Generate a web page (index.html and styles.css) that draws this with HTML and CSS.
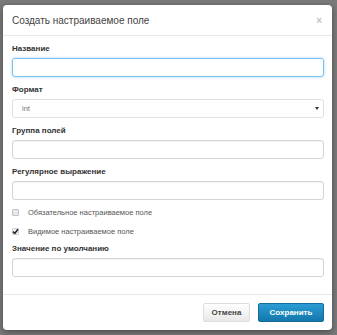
FILE: index.html
```html
<!DOCTYPE html>
<html>
<head>
<meta charset="utf-8">
<link rel="stylesheet" href="styles.css">
</head>
<body>
<div class="modal">
  <div class="modal-header">
    <h4 class="title">Создать настраиваемое поле</h4>
    <span class="close">×</span>
  </div>
  <div class="modal-body">
    <div class="group">
      <label class="lbl">Название</label>
      <div class="input focus"></div>
    </div>
    <div class="group">
      <label class="lbl">Формат</label>
      <div class="input select"><span class="val">int</span><span class="caret"></span></div>
    </div>
    <div class="group">
      <label class="lbl">Группа полей</label>
      <div class="input"></div>
    </div>
    <div class="group">
      <label class="lbl">Регулярное выражение</label>
      <div class="input"></div>
    </div>
    <div class="check first"><span class="box"></span>Обязательное настраиваемое поле</div>
    <div class="check"><span class="box checked"><svg width="7" height="7" viewBox="0 0 7 7"><path d="M1 3.6 L2.8 5.4 L6 1.2" fill="none" stroke="#222" stroke-width="1.6"/></svg></span>Видимое настраиваемое поле</div>
    <div class="group after-check">
      <label class="lbl">Значение по умолчанию</label>
      <div class="input"></div>
    </div>
  </div>
  <div class="modal-footer">
    <button class="btn btn-default">Отмена</button>
    <button class="btn btn-primary">Сохранить</button>
  </div>
</div>
</body>
</html>
```
FILE: styles.css
```css
html, body { margin: 0; padding: 0; }
body {
  width: 337px; height: 335px;
  background: #7a7a7a;
  font-family: "Liberation Sans", Arial, sans-serif;
  overflow: hidden;
  padding: 5px 5px 0 3px;
  box-sizing: border-box;
}
.modal {
  width: 329px;
  height: 325px;
  background: #fff;
  border-radius: 4px;
  box-shadow: 0 2px 6px rgba(0,0,0,0.4);
  box-sizing: border-box;
  display: flex;
  flex-direction: column;
}
.modal-header {
  height: 30px;
  flex: none;
  border-bottom: 1px solid #e8e8e8;
  display: flex;
  align-items: center;
  justify-content: space-between;
  padding: 0 10px 0 9px;
}
.title {
  margin: 0;
  font-weight: normal;
  font-size: 10px;
  color: #444;
  padding-top: 1px;
}
.close {
  color: #c4c4c4;
  font-size: 10px;
  font-weight: bold;
}
.modal-body {
  padding: 8px 8px 8px 9px;
  flex: 1;
  border-bottom: 1px solid #e8e8e8;
}
.group { margin-bottom: 8px; }
.lbl {
  display: block;
  font-size: 8px;
  font-weight: bold;
  color: #333;
  height: 10px;
  line-height: 10px;
  margin-bottom: 4px;
}
.input {
  height: 19px;
  border: 1px solid #d4d4d4;
  border-radius: 3px;
  box-sizing: border-box;
  box-shadow: inset 0 1px 1px rgba(0,0,0,0.05);
}
.input.focus {
  border-color: #7cc0ee;
  box-shadow: 0 0 3px rgba(102,175,233,0.55);
}
.select {
  display: flex;
  align-items: center;
  justify-content: space-between;
  padding: 0 4px 0 9px;
  border-color: #e0e0e0;
  box-shadow: none;
}
.val { font-size: 7.5px; color: #777; }
.caret {
  width: 0; height: 0;
  border-left: 2px solid transparent;
  border-right: 2px solid transparent;
  border-top: 3px solid #333;
}
.check {
  display: flex;
  align-items: center;
  font-size: 7.5px;
  color: #555;
  height: 12px;
  margin-bottom: 7px;
}
.check.first { margin-top: -2px; }
.group.after-check { margin-top: 3px; }
.box {
  width: 5px; height: 5px;
  border: 1px solid #c4c4c4;
  background: #e8e8e8;
  border-radius: 1px;
  margin: 0 9px 0 0;
  display: flex;
  align-items: center;
  justify-content: center;
  flex: none;
}
.box.checked { border-color: #d0d0d0; background: #f0f0f0; }
.box svg { display: block; flex: none; }
.modal-footer {
  height: 35px;
  flex: none;
  display: flex;
  justify-content: flex-end;
  align-items: center;
  gap: 8px;
  padding: 0 8px 0 0;
}
.btn {
  height: 19px;
  border-radius: 2px;
  font-family: "Liberation Sans", Arial, sans-serif;
  font-size: 8px;
  font-weight: bold;
  padding: 0;
}
.btn-default {
  width: 47px;
  color: #444;
  background: linear-gradient(#fff, #e8e8e8);
  border: 1px solid #ddd;
}
.btn-primary {
  width: 66px;
  color: #fff;
  background: linear-gradient(#2b9dd4, #1377ab);
  border: 1px solid #136d9c;
}
```
